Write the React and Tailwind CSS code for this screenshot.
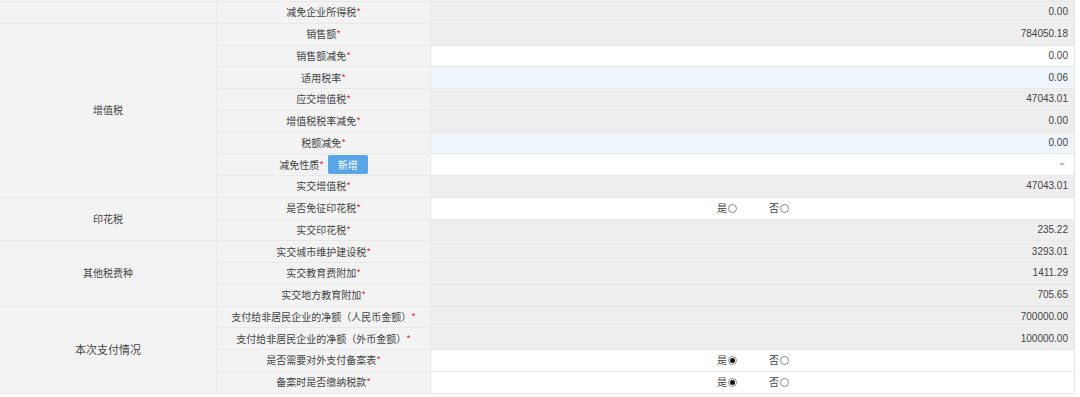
import React from 'react';

const ROW_H = 'h-[21.76px]';

const groups = [
  {
    title: '',
    rows: [
      { label: '减免企业所得税', value: '0.00', tone: 'gray' },
    ],
  },
  {
    title: '增值税',
    rows: [
      { label: '销售额', value: '784050.18', tone: 'gray' },
      { label: '销售额减免', value: '0.00', tone: 'white' },
      { label: '适用税率', value: '0.06', tone: 'blue' },
      { label: '应交增值税', value: '47043.01', tone: 'gray' },
      { label: '增值税税率减免', value: '0.00', tone: 'gray' },
      { label: '税额减免', value: '0.00', tone: 'blue' },
      { label: '减免性质', kind: 'select', tone: 'white', button: '新增' },
      { label: '实交增值税', value: '47043.01', tone: 'gray' },
    ],
  },
  {
    title: '印花税',
    rows: [
      { label: '是否免征印花税', kind: 'radio', checked: null, tone: 'white' },
      { label: '实交印花税', value: '235.22', tone: 'gray' },
    ],
  },
  {
    title: '其他税费种',
    rows: [
      { label: '实交城市维护建设税', value: '3293.01', tone: 'gray' },
      { label: '实交教育费附加', value: '1411.29', tone: 'gray' },
      { label: '实交地方教育附加', value: '705.65', tone: 'gray' },
    ],
  },
  {
    title: '本次支付情况',
    big: true,
    rows: [
      { label: '支付给非居民企业的净额（人民币金额）', value: '700000.00', tone: 'gray' },
      { label: '支付给非居民企业的净额（外币金额）', value: '100000.00', tone: 'gray' },
      { label: '是否需要对外支付备案表', kind: 'radio', checked: 'yes', tone: 'white' },
      { label: '备案时是否缴纳税款', kind: 'radio', checked: 'yes', tone: 'white' },
    ],
  },
];

const toneClass = {
  gray: 'bg-[#eeeeee]',
  white: 'bg-white',
  blue: 'bg-[#eef5fb]',
};

const Radio = ({ on }) => (
  <span className="inline-flex items-center justify-center w-[9px] h-[9px] rounded-full border border-[#8a8a8a] bg-white ml-[1px]">
    {on && <span className="w-[5px] h-[5px] rounded-full bg-[#111]" />}
  </span>
);

const ValueCell = ({ row }) => {
  if (row.kind === 'radio') {
    return (
      <div className={`flex-1 ${toneClass[row.tone]} flex items-center pl-[286px] gap-[32px]`}>
        <span className="flex items-center">是<Radio on={row.checked === 'yes'} /></span>
        <span className="flex items-center">否<Radio on={row.checked === 'no'} /></span>
      </div>
    );
  }
  if (row.kind === 'select') {
    return (
      <div className={`flex-1 ${toneClass[row.tone]} flex items-center justify-end pr-[9px]`}>
        <span className="w-0 h-0 border-l-[3px] border-r-[3px] border-t-[3px] border-l-transparent border-r-transparent border-t-[#b5b5b5]" />
      </div>
    );
  }
  return (
    <div className={`flex-1 ${toneClass[row.tone]} flex items-center justify-end pr-[6px] font-['Liberation_Sans',sans-serif]`}>
      {row.value}
    </div>
  );
};

const Row = ({ row }) => (
  <div className={`flex ${ROW_H} border-b border-[#e8e8e8]`}>
    <div className="w-[214px] flex items-center justify-center border-r border-[#e8e8e8] bg-[#f3f3f3]">
      <span>
        {row.label}
        <span className="text-[#e0303a]">*</span>
      </span>
      {row.button && (
        <span className="ml-[4px] w-[40px] h-[19px] flex items-center justify-center rounded-[2px] bg-[#58a6e6] text-white">
          {row.button}
        </span>
      )}
    </div>
    <ValueCell row={row} />
  </div>
);

export default function App() {
  return (
    <div className="w-[1080px] h-[397px] overflow-hidden bg-white text-[10px] text-[#444] font-['Noto_Sans_CJK_SC','Noto_Sans',sans-serif] leading-none">
      <div className="w-[1075px] bg-[#f3f3f3] border-r border-[#e6e6e6]">
        {/* partial row cut off at top */}
        <div className="flex h-[2px] border-b border-[#e8e8e8]">
          <div className="w-[217px] border-r border-[#e8e8e8]" />
          <div className="w-[214px] border-r border-[#e8e8e8]" />
          <div className="flex-1 bg-[#eeeeee]" />
        </div>
        {groups.map((g, i) => (
          <div key={i} className="flex">
            <div
              className={`w-[217px] flex items-center justify-center border-r border-b border-[#e8e8e8] ${
                g.big ? 'text-[11px]' : ''
              }`}
            >
              {g.title}
            </div>
            <div className="flex-1 flex flex-col">
              {g.rows.map((r, j) => (
                <Row key={j} row={r} />
              ))}
            </div>
          </div>
        ))}
      </div>
    </div>
  );
}
